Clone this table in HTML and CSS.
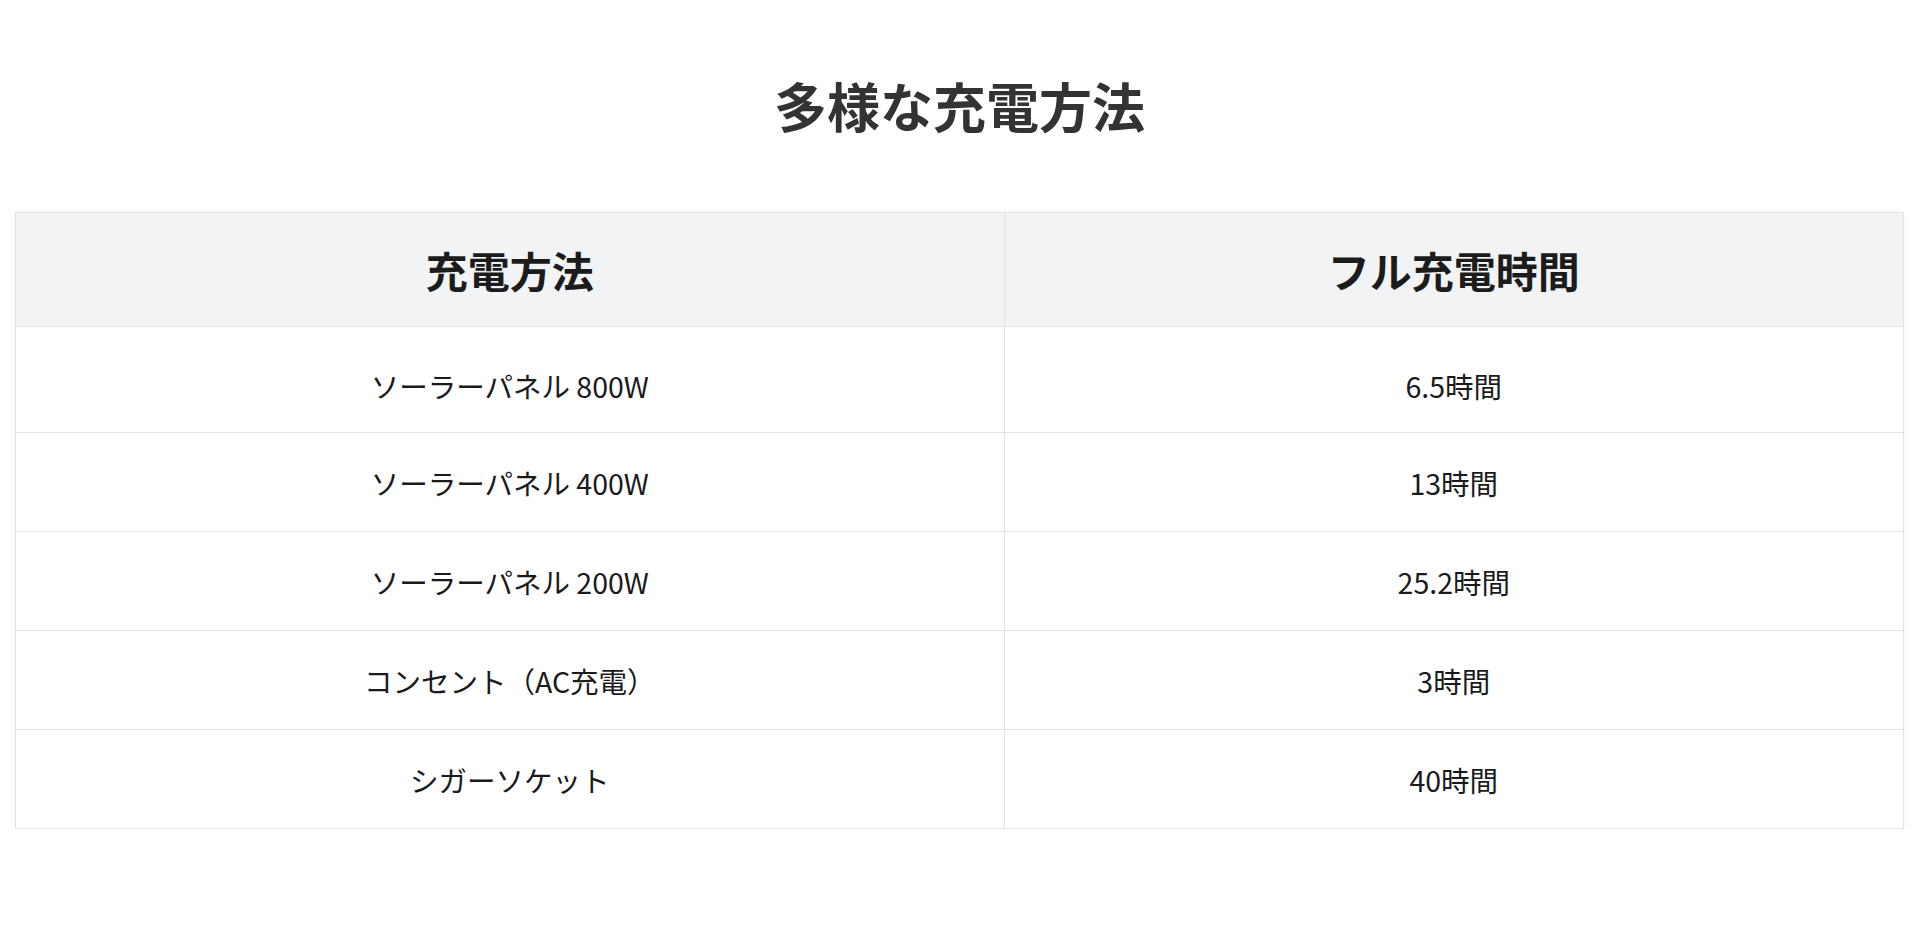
FILE: index.html
```html
<!DOCTYPE html>
<html lang="ja">
<head>
<meta charset="utf-8">
<title>多様な充電方法</title>
<link rel="stylesheet" href="styles.css">
</head>
<body>
<section class="charging">
  <h2 class="charging-title">多様な充電方法</h2>
  <table class="charging-table">
    <colgroup>
      <col class="col-method">
      <col class="col-time">
    </colgroup>
    <thead>
      <tr class="head-row">
        <th>充電方法</th>
        <th>フル充電時間</th>
      </tr>
    </thead>
    <tbody>
      <tr class="first-row"><td>ソーラーパネル 800W</td><td>6.5時間</td></tr>
      <tr><td>ソーラーパネル 400W</td><td>13時間</td></tr>
      <tr><td>ソーラーパネル 200W</td><td>25.2時間</td></tr>
      <tr><td>コンセント（AC充電）</td><td>3時間</td></tr>
      <tr><td>シガーソケット</td><td>40時間</td></tr>
    </tbody>
  </table>
</section>
</body>
</html>
```

FILE: styles.css
```css
html, body {
  margin: 0;
  padding: 0;
  background: #ffffff;
}

body {
  font-family: "Noto Sans CJK JP", "Noto Sans", sans-serif;
  color: #1a1a1a;
}

.charging {
  padding: 0 16px 0 15px;
}

.charging-title {
  margin: 74px 0 76px;
  font-size: 53px;
  line-height: 62px;
  font-weight: 700;
  color: #333333;
  text-align: center;
}

.charging-table {
  width: 100%;
  border-collapse: collapse;
  table-layout: fixed;
  border: 1px solid #e3e3e3;
  box-shadow: 0 0 6px rgba(0, 0, 0, 0.04);
}

.col-method {
  width: 52.36%;
}

.col-time {
  width: 47.64%;
}

.charging-table th,
.charging-table td {
  border: 1px solid #e3e3e3;
  text-align: center;
  vertical-align: middle;
  padding: 0;
}

.charging-table th {
  height: 113px;
  background: #f2f3f5;
  font-size: 42px;
  font-weight: 700;
  color: #1c1c1c;
}

.charging-table td {
  height: 98px;
  font-size: 28.5px;
  font-weight: 400;
  color: #1a1a1a;
}

.charging-table .first-row td {
  height: 94px;
  padding-top: 11px;
}
```
